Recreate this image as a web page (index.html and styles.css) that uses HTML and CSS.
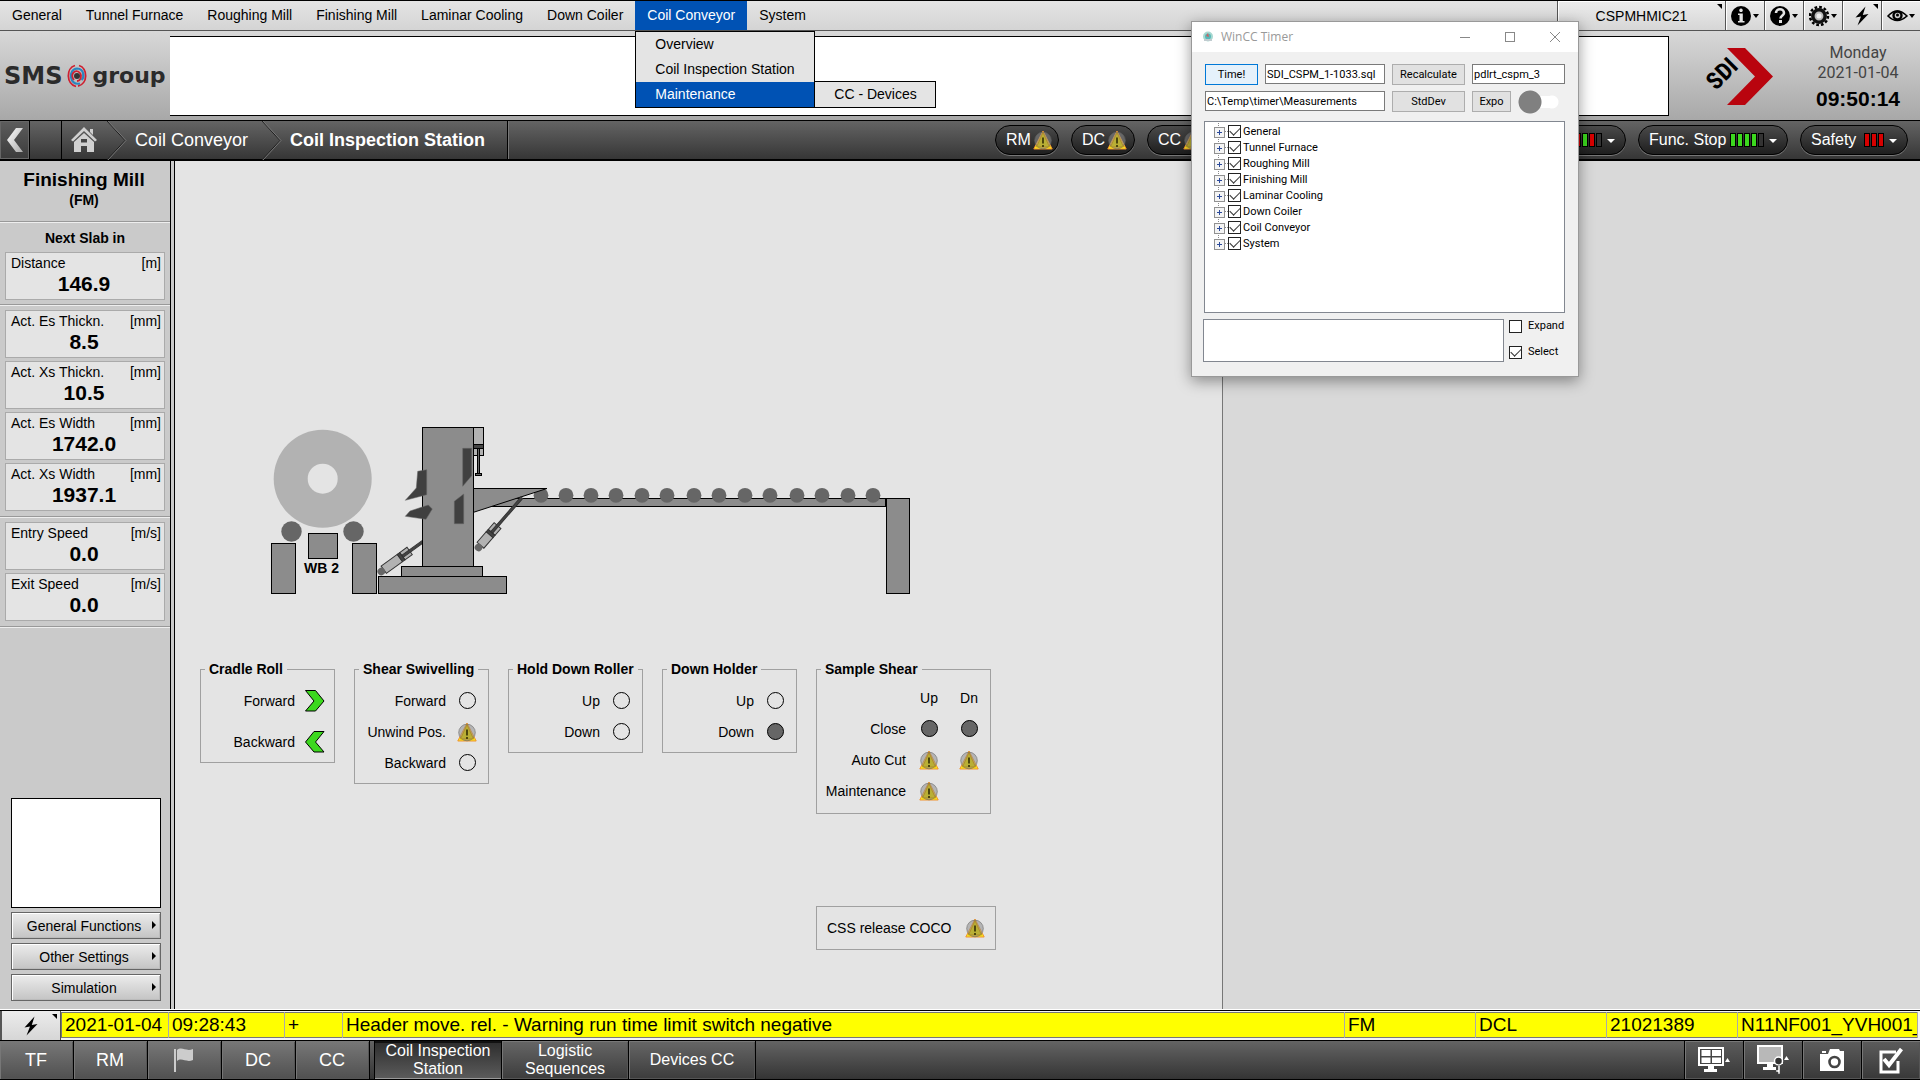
FILE: index.html
```html
<!DOCTYPE html>
<html lang="en">
<head>
<meta charset="utf-8">
<title>Coil Inspection Station</title>
<link rel="stylesheet" href="styles.css">
</head>
<body>
<svg class="defs" aria-hidden="true">
  <defs>
    <symbol id="warn" viewBox="0 0 20 20">
      <path d="M10 1 L19.2 19 H0.8 Z" fill="#f6ea1e" stroke="#f0922e" stroke-width="1"/>
      <circle cx="10" cy="10.500" r="8.300" fill="#8c8c8c" fill-opacity=".55" stroke="#666" stroke-opacity=".6"/>
      <path d="M10 2.500 L16.500 17 H3.500 Z" fill="#b8ac2c" fill-opacity=".8" stroke="#a8741c" stroke-width=".6"/>
      <path d="M10 7.500 V13.500 M10 15 V17" stroke="#3a3508" stroke-width="1.700"/>
    </symbol>
    <symbol id="bolt" viewBox="0 0 16 20">
      <path d="M11.500 0.500 L1.500 11.500 L7 10.500 L3.500 19.500 L14.500 8 L8.800 9 Z" fill="#000"/>
    </symbol>
    <linearGradient id="fade" x1="0" y1="0" x2="1" y2="1"><stop offset="0" stop-color="#fff"/><stop offset="1" stop-color="#aaa"/></linearGradient>
  </defs>
</svg>

<header>
  <div class="menubar">
    <nav>
      <ul class="menu">
        <li><a href="#">General</a></li>
        <li><a href="#">Tunnel Furnace</a></li>
        <li><a href="#">Roughing Mill</a></li>
        <li><a href="#">Finishing Mill</a></li>
        <li><a href="#">Laminar Cooling</a></li>
        <li><a href="#">Down Coiler</a></li>
        <li class="open"><a href="#">Coil Conveyor</a>
          <ul class="submenu">
            <li><a href="#">Overview</a></li>
            <li><a href="#">Coil Inspection Station</a></li>
            <li class="open"><a href="#">Maintenance</a>
              <ul class="submenu side"><li><a href="#">CC - Devices</a></li></ul>
            </li>
          </ul>
        </li>
        <li><a href="#">System</a></li>
      </ul>
    </nav>
    <div class="tools">
      <button class="host corner">CSPMHMIC21</button>
      <button aria-label="Information"><svg width="28" height="22" viewBox="0 0 28 22"><circle cx="10" cy="11" r="10"/><path d="M10 3.500 a1.800 1.800 0 1 1 -.01 0Z M7 8.500 H11.800 V16 H13.500 V17.500 H7 V16 H8.500 V10 H7Z" fill="#e4e4e4"/><path d="M22 9 h6 l-3 4Z"/></svg></button>
      <button aria-label="Help"><svg width="28" height="22" viewBox="0 0 28 22"><circle cx="10" cy="11" r="10"/><path d="M6 8 C6 3 14 3 14 8 C14 10.500 10.500 10.500 10.500 13.500" fill="none" stroke="#e4e4e4" stroke-width="2.600"/><rect x="9" y="15" width="3" height="3" fill="#e4e4e4"/><path d="M22 9 h6 l-3 4Z"/></svg></button>
      <button aria-label="Settings"><svg width="28" height="22" viewBox="0 0 28 22"><circle cx="10" cy="11" r="9" fill="none" stroke="#000" stroke-width="2.500" stroke-dasharray="2.700 2"/><circle cx="10" cy="11" r="6.200" fill="#bbb" stroke="#111" stroke-width="3.500"/><circle cx="10" cy="11" r="2.500" fill="#eee"/><path d="M22 9 h6 l-3 4Z"/></svg></button>
      <button class="corner" aria-label="Quick actions"><svg width="16" height="20"><use href="#bolt"/></svg></button>
      <button aria-label="View"><svg width="28" height="22" viewBox="0 0 28 22"><path d="M1 11 Q10 1 20 11 Q10 20 1 11Z" fill="none" stroke="#000" stroke-width="1.600"/><circle cx="10.500" cy="10.500" r="4" fill="#ccc" stroke="#000" stroke-width="2.400"/><circle cx="10.500" cy="10" r="1.500"/><path d="M22 9 h6 l-3 4Z"/></svg></button>
    </div>
  </div>

  <div class="banner">
    <div class="brand"><b>SMS</b><svg width="20" height="24" viewBox="0 0 20 24" fill="none"><path d="M8 1.500 C-1 4 -1 20 9 22.500 M11 22 C21 20 21 4 12 1.500" stroke="#cf2030" stroke-width="1.800"/><path d="M13 19.500 C2 22 1 5 10 4.500 C18 5 17 14 14.500 16" stroke="#2a86c0" stroke-width="2.200"/><path d="M7 16 C3 11 7 6 11 7.500 C16 10 14 17 10 17" stroke="#cf2030" stroke-width="1.800"/><circle cx="10" cy="12" r="3" fill="#333"/></svg>group</div>
    <div class="message"></div>
    <svg class="sdi" width="72" height="60" viewBox="1702 44 72 60" role="img" aria-label="SDI">
      <path d="M1727 46 H1745 L1773 74.500 L1745 103 H1727 L1755 74.500 Z" fill="#b9040e"/>
      <text x="1716" y="89" transform="rotate(-45 1716 89)">SDI</text>
    </svg>
    <div class="clock"><span>Monday</span><span>2021-01-04</span><strong>09:50:14</strong></div>
  </div>

  <div class="statusbar">
    <button class="back" aria-label="Back"><svg width="18" height="26" viewBox="0 0 18 26"><path d="M10 1 H17 L8 13 L17 25 H10 L1 13Z" fill="url(#fade)"/></svg></button>
    <span class="slot"></span>
    <nav class="crumbs">
      <a href="#" class="home" aria-label="Home"><svg width="26" height="26" viewBox="0 0 26 26" fill="#d0d0d0"><path d="M13 0 L26 13 L24 14.500 L13 4 L2 14.500 L0 13Z"/><path d="M19 2 h3 v6 l-3 -3Z"/><path d="M13 6 L23 15 V25 H16 V19 H10 V25 H3 V15Z"/><path d="M10 12 h6 v3.500 h-6Z" fill="#444"/></svg></a>
      <svg class="sep" width="20" height="39" viewBox="0 0 20 39" fill="none"><path d="M0 0 L18 19.500 L0 39" stroke="#1c1c1c"/><path d="M1 0 L19 19.500 L1 39" stroke="#777"/></svg>
      <a href="#">Coil Conveyor</a>
      <svg class="sep" width="20" height="39" viewBox="0 0 20 39" fill="none"><path d="M0 0 L18 19.500 L0 39" stroke="#1c1c1c"/><path d="M1 0 L19 19.500 L1 39" stroke="#777"/></svg>
      <a href="#" class="current">Coil Inspection Station</a>
    </nav>
    <div class="pills areas">
      <button class="pill">RM<svg width="20" height="20"><use href="#warn"/></svg></button>
      <button class="pill">DC<svg width="20" height="20"><use href="#warn"/></svg></button>
      <button class="pill">CC<svg width="20" height="20"><use href="#warn"/></svg></button>
    </div>
    <div class="pills stops">
      <button class="pill wide end" aria-label="Stop status"><span class="bars"><i class="g"></i><i class="r"></i><i class="g"></i><i class="r"></i><i></i></span><span class="tri"></span></button>
      <button class="pill wide">Func. Stop<span class="bars"><i class="g"></i><i class="g"></i><i class="g"></i><i class="g"></i><i></i></span><span class="tri"></span></button>
      <button class="pill safety">Safety<span class="bars"><i class="r"></i><i class="r"></i><i class="r"></i></span><span class="tri"></span></button>
    </div>
  </div>
</header>

<div class="body">
  <aside>
    <div class="title"><h1>Finishing Mill</h1><h2>(FM)</h2></div>
    <section>
      <h2>Next Slab in</h2>
      <div class="value"><span>Distance</span><span>[m]</span><strong>146.9</strong></div>
    </section>
    <section>
      <div class="value"><span>Act. Es Thickn.</span><span>[mm]</span><strong>8.5</strong></div>
      <div class="value"><span>Act. Xs Thickn.</span><span>[mm]</span><strong>10.5</strong></div>
      <div class="value"><span>Act. Es Width</span><span>[mm]</span><strong>1742.0</strong></div>
      <div class="value"><span>Act. Xs Width</span><span>[mm]</span><strong>1937.1</strong></div>
    </section>
    <section>
      <div class="value"><span>Entry Speed</span><span>[m/s]</span><strong>0.0</strong></div>
      <div class="value"><span>Exit Speed</span><span>[m/s]</span><strong>0.0</strong></div>
    </section>
    <div class="actions">
      <div class="preview"></div>
      <button>General Functions</button>
      <button>Other Settings</button>
      <button>Simulation</button>
    </div>
  </aside>

  <main>
    <svg class="machine" width="660" height="180" viewBox="260 420 660 180" role="img" aria-label="Coil inspection machine">
      <circle cx="322.700" cy="478.700" r="49" fill="#b2b2b2"/><circle cx="322.700" cy="478.700" r="15" fill="#e4e4e4"/>
      <circle cx="291.500" cy="531.500" r="10.200" fill="#666"/><circle cx="353.500" cy="531.500" r="10.200" fill="#666"/>
      <g fill="#8c8c8c" stroke="#000">
        <rect x="308.500" y="533.500" width="29" height="25"/>
        <rect x="271.500" y="543.500" width="24" height="50"/>
        <rect x="352.500" y="543.500" width="24" height="50"/>
        <rect x="378.500" y="576.500" width="128" height="17"/>
        <rect x="401.500" y="566.500" width="81" height="10"/>
      </g>
      <text x="304" y="573">WB 2</text>
      <g transform="translate(381.300 571.500) rotate(-36)" stroke="#333">
        <path d="M26 -4.500 H35 V4.500 H26Z M3 -4.500 H23 V4.500 H3Z" fill="#b2b2b2"/>
        <rect x="26" y="-1" width="26" height="2.400" fill="#444"/><rect x="23" y="-4.500" width="3" height="9" fill="#444"/>
        <circle r="3.800" fill="#666" stroke="none"/>
      </g>
      <g fill="#8c8c8c" stroke="#000">
        <rect x="422.500" y="427.500" width="51" height="139"/>
        <rect x="480.500" y="498.500" width="405" height="8"/>
        <rect x="886.500" y="498.500" width="23" height="95"/>
      </g>
      <g fill="#666">
        <circle cx="541" cy="495.300" r="7.400"/><circle cx="566" cy="495.300" r="7.400"/><circle cx="591" cy="495.300" r="7.400"/><circle cx="616" cy="495.300" r="7.400"/><circle cx="642" cy="495.300" r="7.400"/><circle cx="667" cy="495.300" r="7.400"/><circle cx="694" cy="495.300" r="7.400"/><circle cx="719" cy="495.300" r="7.400"/><circle cx="745" cy="495.300" r="7.400"/><circle cx="770" cy="495.300" r="7.400"/><circle cx="797" cy="495.300" r="7.400"/><circle cx="822" cy="495.300" r="7.400"/><circle cx="848" cy="495.300" r="7.400"/><circle cx="873" cy="495.300" r="7.400"/>
      </g>
      <path d="M473.500 488.500 H547 L473.500 512.300Z" fill="#8c8c8c" stroke="#000"/>
      <g transform="translate(478.500 547.500) rotate(-49)" stroke="#333">
        <path d="M20 -4.500 H29 V4.500 H20Z M3 -4.500 H17 V4.500 H3Z" fill="#b2b2b2"/>
        <rect x="20" y="-1.200" width="46" height="2.400" fill="#444"/><rect x="17" y="-4.500" width="3" height="9" fill="#444"/>
        <circle r="3.800" fill="#666" stroke="none"/>
      </g>
      <rect x="473.500" y="427.500" width="10" height="28" fill="#b2b2b2" stroke="#000"/>
      <rect x="473.500" y="444.500" width="10" height="4" fill="#444" stroke="#000"/>
      <rect x="477.500" y="448.500" width="2" height="25" fill="#666" stroke="#000"/>
      <rect x="475.500" y="473.500" width="6" height="2" fill="#666" stroke="#000"/>
      <g fill="#404040" stroke="#666" stroke-width=".5">
        <path d="M462.700 448.300 H471.700 V475.700 L462.700 486.300Z"/>
        <path d="M454.300 501.300 L463.700 494 V523.700 H454.300Z"/>
        <path d="M417.700 471.300 L426.700 469.700 V494.700 L405.300 500.300 L416.300 488Z"/>
        <path d="M410 511 L428.300 505 L432.300 509 L426 519.300 L405.300 516.300Z"/>
      </g>
    </svg>

    <div class="groups">
      <fieldset class="tall"><legend>Cradle Roll</legend>
        <div class="row"><span>Forward</span><svg width="20" height="22" viewBox="0 0 20 22"><path d="M.5 .5 H10.500 L19 11 L10.500 21 H.5 L9 11Z" fill="#3cd81e" stroke="#000"/></svg></div>
        <div class="row"><span>Backward</span><svg width="20" height="22" viewBox="0 0 20 22"><path d="M19 .5 H9 L.5 11 L9 21 H19 L10.500 11Z" fill="#3cd81e" stroke="#000"/></svg></div>
      </fieldset>
      <fieldset><legend>Shear Swivelling</legend>
        <div class="row"><span>Forward</span><i class="lamp"></i></div>
        <div class="row"><span>Unwind Pos.</span><svg width="20" height="20"><use href="#warn"/></svg></div>
        <div class="row"><span>Backward</span><i class="lamp"></i></div>
      </fieldset>
      <fieldset><legend>Hold Down Roller</legend>
        <div class="row"><span>Up</span><i class="lamp"></i></div>
        <div class="row"><span>Down</span><i class="lamp"></i></div>
      </fieldset>
      <fieldset><legend>Down Holder</legend>
        <div class="row"><span>Up</span><i class="lamp"></i></div>
        <div class="row"><span>Down</span><i class="lamp on"></i></div>
      </fieldset>
      <fieldset class="double"><legend>Sample Shear</legend>
        <div class="row"><span></span><b>Up</b><b>Dn</b></div>
        <div class="row"><span>Close</span><i class="lamp on"></i><i class="lamp on"></i></div>
        <div class="row"><span>Auto Cut</span><svg width="20" height="20"><use href="#warn"/></svg><svg width="20" height="20"><use href="#warn"/></svg></div>
        <div class="row"><span>Maintenance</span><svg width="20" height="20"><use href="#warn"/></svg></div>
      </fieldset>
    </div>
    <div class="release">CSS release COCO<svg width="20" height="20"><use href="#warn"/></svg></div>
  </main>
  <div class="empty"></div>
</div>

<footer>
  <div class="alarms">
    <button class="corner" aria-label="Alarms"><svg width="16" height="20"><use href="#bolt"/></svg></button>
    <table>
      <colgroup><col class="c-date"><col class="c-time"><col class="c-sign"><col><col class="c-code"><col class="c-code"><col class="c-code"><col class="c-tag"></colgroup>
      <tr><td>2021-01-04</td><td>09:28:43</td><td>+</td><td>Header move. rel. - Warning run time limit switch negative</td><td>FM</td><td>DCL</td><td>21021389</td><td>N11NF001_YVH001_</td></tr>
    </table>
  </div>
  <div class="taskbar">
    <div class="areas-nav">
      <button>TF</button><button>RM</button>
      <button aria-label="Finishing Mill"><svg width="20" height="24" viewBox="0 0 20 24" fill="#ccc"><path d="M0 1 H2 V24 H0Z M3 2 C8 -2 12 4 19 1 V12 C12 15 8 9 3 13Z"/></svg></button>
      <button>DC</button><button>CC</button>
    </div>
    <div class="pages">
      <button class="active">Coil Inspection<br>Station</button><button>Logistic<br>Sequences</button><button>Devices CC</button>
    </div>
    <div class="sys">
      <button aria-label="Screens"><svg width="32" height="26" viewBox="0 0 32 26" fill="#fff"><path d="M0 0 H26 V19 H16 V22 H19 V25 H6 V22 H10 V19 H0Z"/><path d="M2 2 H24 V17 H2Z" fill="#444"/><path d="M3.500 3 H12.500 V9 H3.500Z M14 3 H23 V9 H14Z M3.500 10.500 H12.500 V16 H3.500Z M14 10.500 H23 V16 H14Z"/><path d="M27 15 h5 l-2.500 -4Z"/></svg></button>
      <button aria-label="Screen access"><svg width="32" height="30" viewBox="0 0 32 30" fill="#fff"><path d="M0 0 H26 V19 H16 V22 H19 V25 H6 V22 H10 V19 H0Z"/><path d="M2 2 H24 V17 H2Z" fill="#b8b8b8"/><circle cx="21.500" cy="16" r="4" fill="#333" stroke="#fff" stroke-width="1.500"/><path d="M21 20 h2 v9 h-2 v-2 h-2 v-2 h2Z" stroke="#444" stroke-width=".5"/><path d="M27 15 h5 l-2.500 -4Z"/></svg></button>
      <button aria-label="Screenshot"><svg width="24" height="24" viewBox="0 0 24 24" fill="#fff"><path d="M0 6 H8 L10 1 H19 L20 3 H24 V23 H0Z M2 3 H6 V5 H2Z"/><circle cx="14.500" cy="14" r="5" fill="#fff" stroke="#444" stroke-width="2.600"/></svg></button>
      <button aria-label="Acknowledge"><svg width="24" height="28" viewBox="0 0 24 28" fill="none" stroke="#fff"><path d="M17 6 H2 V26 H19 V15" stroke-width="3"/><path d="M5 13 L10 19 L22.500 3" stroke-width="4"/></svg></button>
    </div>
  </div>
</footer>

<section class="window" aria-label="WinCC Timer">
  <div class="caption">
    <svg width="12" height="12" viewBox="0 0 12 12"><circle cx="6" cy="5.500" r="4" fill="#58b8b8" stroke="#a8d8d0" stroke-width="2"/><path d="M2 9 h8" stroke="#c0ccd0" stroke-width="2"/><path d="M6 2 L7 6 L4 5Z" fill="#d06060"/></svg>
    <span>WinCC Timer</span>
    <button aria-label="Minimize"><svg width="10" height="10"><path d="M0 5.500 H10" stroke="#888"/></svg></button>
    <button aria-label="Maximize"><svg width="10" height="10"><rect x=".5" y=".5" width="9" height="9" fill="none" stroke="#888"/></svg></button>
    <button aria-label="Close"><svg width="10" height="10"><path d="M0 0 L10 10 M10 0 L0 10" stroke="#888"/></svg></button>
  </div>
  <div class="form">
    <button class="primary">Time!</button>
    <input type="text" aria-label="SQL file" value="SDI_CSPM_1-1033.sql">
    <button>Recalculate</button>
    <input type="text" aria-label="Database" value="pdlrt_cspm_3">
    <input type="text" class="path" aria-label="Folder" value="C:\Temp\timer\Measurements">
    <button>StdDev</button>
    <div class="expo"><button>Expo</button><input type="checkbox" class="switch" aria-label="Running"></div>
  </div>
  <ul class="tree">
    <li><label><input type="checkbox" checked>General</label></li>
    <li><label><input type="checkbox" checked>Tunnel Furnace</label></li>
    <li><label><input type="checkbox" checked>Roughing Mill</label></li>
    <li><label><input type="checkbox" checked>Finishing Mill</label></li>
    <li><label><input type="checkbox" checked>Laminar Cooling</label></li>
    <li><label><input type="checkbox" checked>Down Coiler</label></li>
    <li><label><input type="checkbox" checked>Coil Conveyor</label></li>
    <li><label><input type="checkbox" checked>System</label></li>
  </ul>
  <div class="bottom">
    <textarea aria-label="Log"></textarea>
    <div><label><input type="checkbox">Expand</label><label><input type="checkbox" checked>Select</label></div>
  </div>
</section>
</body>
</html>
```
FILE: styles.css
```css
* { box-sizing: border-box; }
body {
  margin: 0;
  min-height: 100vh;
  display: flex;
  flex-direction: column;
  position: relative;
  overflow-x: hidden;
  background: #d9d9d9;
  color: #000;
  font: 14px/16px "Liberation Sans", Arial, sans-serif;
}
button, input, textarea { font: inherit; color: inherit; margin: 0; border-radius: 0; }
button { padding: 0; border: 0; background: none; }
a { color: inherit; text-decoration: none; }
ul { list-style: none; margin: 0; padding: 0; }
h1, h2 { margin: 0; }
svg { display: block; flex: none; }
.defs { position: absolute; width: 0; height: 0; }

/* menu bar */
.menubar {
  display: flex;
  justify-content: space-between;
  height: 31px;
  border-top: 1px solid #000;
  border-bottom: 1px solid #555;
  background: linear-gradient(#e4e4e4, #d4d4d4);
}
.menu { display: flex; }
.menu li { position: relative; }
.menu > li > a { display: block; padding: 0 12px; line-height: 29px; }
.menu .open > a { background: #0052b4; color: #fff; }
.submenu {
  position: absolute;
  z-index: 2;
  top: 30px;
  left: 0;
  width: 180px;
  border: 1px solid #000;
  background: #e4e4e4;
  white-space: nowrap;
}
.submenu a { display: block; padding: 0 19px; line-height: 25px; }
.submenu.side { top: -1px; left: 178px; width: 122px; }
.tools { display: flex; }
.tools button {
  display: flex;
  align-items: center;
  justify-content: center;
  width: 39px;
  border-left: 1px solid #555;
  background: linear-gradient(#ececec, #d6d6d6);
  box-shadow: inset 1px 1px #fff;
}
.tools .host { width: 168px; }
.corner { position: relative; }
.corner::after {
  content: "";
  position: absolute;
  top: 3px;
  right: 3px;
  border-top: 5px solid #000;
  border-left: 5px solid transparent;
}

/* banner */
.banner {
  display: flex;
  align-items: center;
  height: 89px;
  background: linear-gradient(#d8d8d8, #a8a8a8);
}
.brand {
  display: flex;
  align-items: center;
  gap: 5px;
  width: 170px;
  padding: 0 0 0 4px;
  color: #2b2b2b;
  font: bold 22px/24px "DejaVu Sans", sans-serif;
}
.brand b { font-size: 24px; }
.message {
  flex: 1;
  height: 80px;
  border: 1px solid #000;
  border-left: 0;
  background: #fff;
}
.sdi { margin-left: 33px; }
.sdi text { font: bold 24px "Liberation Sans Narrow", "Roboto Condensed", "Open Sans Condensed", "Liberation Sans", sans-serif; }
.clock {
  display: flex;
  flex-direction: column;
  align-items: center;
  width: 124px;
  margin-left: 22px;
  padding-top: 7px;
  color: #444;
  font: 16px/20px Roboto, sans-serif;
}
.clock strong { color: #000; font: bold 21px/32px "Liberation Sans", Arial, sans-serif; }

/* status bar */
.statusbar {
  display: flex;
  height: 41px;
  border-top: 1px solid #000;
  border-bottom: 2px solid #000;
  background: linear-gradient(#646464, #363636);
  color: #fff;
}
.back {
  display: flex;
  align-items: center;
  justify-content: center;
  width: 29px;
  border: 1px solid #666;
  background: linear-gradient(#5c5c5c, #3c3c3c);
}
.slot { width: 33px; border: solid #000; border-width: 0 1px; }
.crumbs {
  display: flex;
  align-items: center;
  padding-right: 22px;
  border-right: 1px solid #000;
  box-shadow: 1px 0 #777;
  font-size: 18px;
  line-height: 38px;
}
.crumbs .home { padding: 0 9px; }
.crumbs .sep { margin: 0 8px 0 1px; }
.crumbs a:nth-of-type(2) { margin-right: 13px; }
.crumbs .current { font-weight: bold; }
.pills { display: flex; align-items: center; gap: 12px; }
.areas { margin-left: auto; margin-right: 265px; }
.stops { padding-right: 12px; }
.pill {
  display: flex;
  align-items: center;
  gap: 2px;
  width: 64px;
  height: 30px;
  padding: 0 8px 0 10px;
  border: 1px solid #000;
  border-radius: 15px;
  background: linear-gradient(#4a4a4a, #1e1e1e);
  box-shadow: 0 1px #777;
  font-size: 16px;
}
.pill.wide { width: 150px; }
.pill.safety { width: 108px; }
.bars { display: flex; gap: 1px; margin-left: auto; }
.bars i { width: 6px; height: 14px; border: 1px solid #000; background: #333; }
.bars .g { background: #3cd81e; }
.bars .r { background: #d80000; }
.tri { margin: 2px 2px 0 3px; border: 4px solid transparent; border-top-color: #fff; border-bottom: 0; }

/* body */
.body { flex: 1; display: flex; }
aside {
  display: flex;
  flex-direction: column;
  width: 175px;
  border-right: 1px solid #000;
  background: linear-gradient(#000, #000) 170px 0 / 1px 100% no-repeat #cacaca;
  padding-right: 4px;
}
.title { padding: 7px 2px 13px 0; text-align: center; }
.title h1 { font-size: 19px; line-height: 24px; }
aside h2 { font-size: 14px; line-height: 16px; text-align: center; }
aside section {
  display: flex;
  flex-direction: column;
  gap: 3px;
  padding: 5px 5px 5px;
  border-top: 1px solid #999;
  box-shadow: inset 0 1px #eee;
}
aside section h2 { padding: 3px 0; }
aside section:first-of-type { padding-bottom: 4px; }
.value {
  display: grid;
  grid-template-columns: 1fr auto;
  height: 48px;
  padding: 2px 3px 4px 5px;
  border: 1px solid #aaa;
  background: #e4e4e4;
}
.value strong { grid-column: 1 / 3; padding-right: 4px; text-align: center; font-size: 21px; line-height: 26px; }
aside section:nth-of-type(3) { box-shadow: inset 0 1px #eee, 0 1px #999, 0 2px #eee; }
.actions { display: flex; flex-direction: column; gap: 4px; margin-top: auto; padding: 0 9px 9px 11px; }
.preview { height: 110px; border: 1px solid #000; background: #fff; }
.actions button {
  position: relative;
  height: 27px;
  padding-right: 4px;
  border: 1px solid #666;
  background: linear-gradient(#ececec, #c4c4c4);
  box-shadow: inset 1px 1px #fff, inset -1px -1px #bbb;
}
.actions button::after {
  content: "";
  position: absolute;
  right: 4px;
  top: 8px;
  border: 4px solid transparent;
  border-left-color: #000;
  border-right: 0;
}
main { flex: 0 1 1048px; padding: 259px 0 0 25px; border-right: 1px solid #777; background: #e4e4e4; }
.empty { flex: 1; background: #d9d9d9; }
.machine { margin-left: 60px; }
.machine text { font: bold 14px "Liberation Sans", Arial, sans-serif; }
.groups { display: flex; align-items: flex-start; gap: 19px; margin-top: 61px; }
fieldset { width: 135px; min-width: 0; margin: 0; padding: 8px 1px 5px 4px; border: 1px solid #a0a0a0; }
legend { padding: 0 4px; font-weight: bold; white-space: nowrap; }
fieldset.tall { padding: 3px 0 0; }
fieldset.tall legend { margin-left: 4px; }
fieldset.double { width: 175px; padding: 5px 1px 7px 4px; }
.row { display: grid; grid-template-columns: 1fr 40px; align-items: center; justify-items: center; height: 31px; }
.double .row { grid-template-columns: 1fr 40px 40px; }
.tall .row { height: 41px; grid-template-columns: 1fr 38px; }
.row span { justify-self: end; padding-right: 1px; }
.double .row span { padding-right: 3px; }
.row b { font-weight: normal; }
.lamp { width: 17px; height: 17px; border: 1px solid #000; border-radius: 50%; }
.lamp.on { background: #666; }
.release {
  display: flex;
  align-items: center;
  justify-content: space-between;
  width: 180px;
  height: 44px;
  margin: 92px 0 0 616px;
  padding: 0 10px;
  border: 1px solid #a0a0a0;
}

/* footer */
.alarms { display: flex; height: 30px; border-top: 1px solid #000; box-shadow: 0 -1px #fff; background: #f4f4f4; }
.alarms > button {
  display: flex;
  align-items: center;
  justify-content: center;
  width: 61px;
  border-left: 2px solid #555;
  border-right: 1px solid #555;
  background: linear-gradient(#ececec, #d6d6d6);
}
.alarms table {
  flex: 1;
  width: 0;
  height: 26px;
  margin: 1px 2px 0 0;
  border: 1px solid #777;
  border-collapse: collapse;
  table-layout: fixed;
  background: #ff0;
  font-size: 19px;
  line-height: 22px;
}
.alarms td { padding: 0 0 0 3px; overflow: hidden; white-space: nowrap; border-right: 1px solid #aaa; }
.c-date { width: 107px; }
.c-time { width: 116px; }
.c-sign { width: 58px; }
.c-code { width: 131px; }
.c-tag { width: 180px; }
.taskbar {
  display: flex;
  height: 40px;
  border: solid #000;
  border-width: 1px 0;
  background: linear-gradient(#646464, #343434);
  color: #fff;
}
.taskbar > div { display: flex; }
.taskbar button {
  display: flex;
  align-items: center;
  justify-content: center;
  border-right: 1px solid #000;
  box-shadow: inset 1px 1px #777, inset -1px -1px #555;
}
.areas-nav button { width: 74px; padding-right: 1px; background: linear-gradient(#787878, #505050); font-size: 18px; }
.pages { margin-left: 4px; border-left: 1px solid #000; font-size: 16px; line-height: 18px; }
.pages button { width: 127px; background: linear-gradient(#666, #3c3c3c); }
.pages .active { background: linear-gradient(#2c2c2c, #5c5c5c); box-shadow: inset 0 2px #111, inset 0 -1px #999; }
.sys { margin-left: auto; border-left: 1px solid #000; }
.sys button { width: 59px; background: linear-gradient(#5c5c5c, #383838); }
.sys button:last-child { border-right: 0; width: 58px; }

/* floating tool window */
.window {
  position: absolute;
  z-index: 5;
  left: 1191px;
  top: 21px;
  width: 388px;
  padding-bottom: 14px;
  border: 1px solid #999;
  background: #f0f0f0;
  box-shadow: 0 4px 14px rgba(0, 0, 0, .4);
  font: 11px/14px Roboto, "Liberation Sans", sans-serif;
}
.caption { display: flex; align-items: center; height: 30px; padding: 0 1px 0 10px; background: #fff; color: #999; font: 12px/30px "Open Sans", "Noto Sans", sans-serif; }
.caption span { margin: 0 auto 0 7px; }
.caption button { display: flex; justify-content: center; width: 45px; }
.form { display: grid; grid-template-columns: 53px 120px 73px 93px; gap: 6px 7px; padding: 12px 13px 0; }
.form button { height: 21px; border: 1px solid #adadad; background: #e1e1e1; }
.form .primary { border-color: #0078d7; background: #e5f1fb; }
.form input[type="text"] { width: 100%; min-width: 0; height: 20px; padding: 0 1px; border: 1px solid #7a7a7a; background: #fff; }
.form .path { grid-column: 1 / 3; }
.expo { display: flex; align-items: center; gap: 7px; height: 21px; }
.expo button { width: 39px; }
.switch {
  appearance: none;
  width: 42px;
  height: 24px;
  border-radius: 12px;
  background: radial-gradient(circle at 12px 12px, #808080 11px, transparent 12px), radial-gradient(circle at 34px 12px, #fff 6px, transparent 7px), linear-gradient(#fff, #fff) 12px 6px / 22px 12px no-repeat;
}
.tree { height: 192px; margin: 9px 13px 0 12px; padding: 1px 8px 0 9px; border: 1px solid #828790; background: #fff; }
.tree li {
  position: relative;
  height: 16px;
  padding-left: 14px;
  background: linear-gradient(90deg, #888 50%, transparent 50%) 9px 8px / 2px 1px repeat-x, linear-gradient(#888 50%, transparent 50%) 4px 0 / 1px 2px repeat-y;
}
.tree li::before {
  content: "";
  position: absolute;
  left: 0;
  top: 4px;
  width: 9px;
  height: 9px;
  border: 1px solid #919191;
  background: linear-gradient(#2b4a9b, #2b4a9b) center / 5px 1px no-repeat, linear-gradient(#2b4a9b, #2b4a9b) center / 1px 5px no-repeat, #f4f4f4;
}
.tree label { display: flex; align-items: center; gap: 2px; height: 17px; background: #fff; }
.window label input {
  appearance: none;
  flex: none;
  width: 13px;
  height: 13px;
  border: 1px solid #222;
  background: #fff;
  display: grid;
  place-items: center;
}
.window label input:checked::after {
  content: "";
  width: 9px;
  height: 5px;
  margin-bottom: 3px;
  border: solid #333;
  border-width: 0 0 1px 1px;
  rotate: -45deg;
}
.bottom { display: flex; gap: 5px; padding: 6px 0 0 11px; }
.bottom textarea { width: 301px; height: 43px; border: 1px solid #828790; background: #fff; resize: none; }
.bottom div { display: flex; flex-direction: column; gap: 12px; }
.bottom label { display: flex; align-items: center; gap: 6px; }
```
